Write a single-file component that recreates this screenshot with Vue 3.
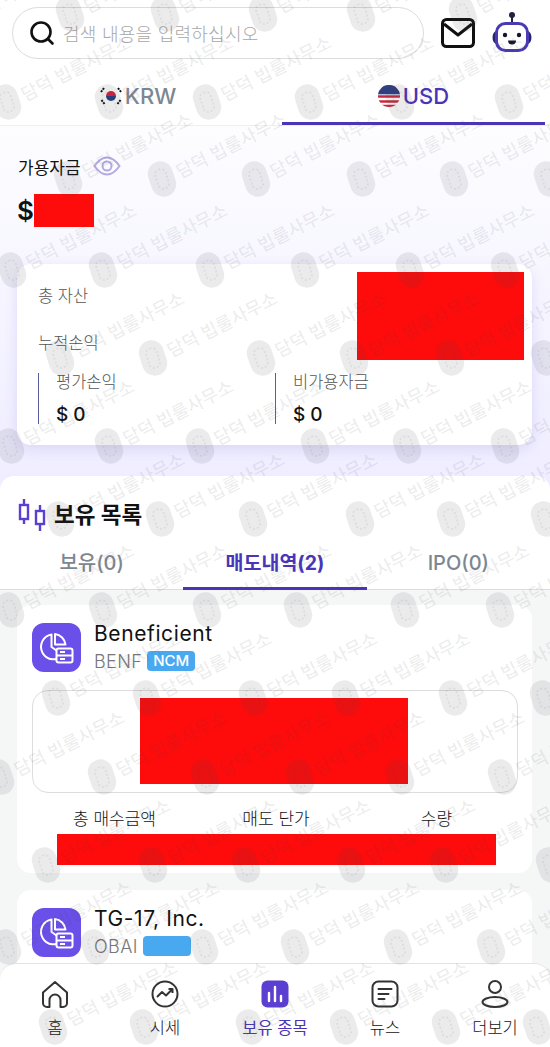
<script setup>
const markRows = [
  { y: 14, xs: [-30, 70, 165, 263, 361, 463] },
  { y: 102, xs: [7, 109, 207, 309, 400, 509] },
  { y: 179, xs: [68, 162, 256, 361, 454, 548] },
  { y: 270, xs: [12, 103, 210, 305, 410, 505] },
  { y: 358, xs: [60, 153, 261, 354, 450, 545] },
  { y: 446, xs: [10, 109, 200, 315, 407, 505] },
  { y: 519, xs: [60, 160, 253, 360, 451, 545] },
  { y: 610, xs: [10, 103, 207, 298, 405, 500] },
  { y: 698, xs: [56, 147, 253, 346, 453, 544] },
  { y: 777, xs: [0, 102, 205, 300, 400, 502] },
  { y: 865, xs: [46, 153, 246, 351, 444, 550] },
  { y: 947, xs: [7, 95, 204, 295, 398, 491] },
  { y: 1027, xs: [53, 144, 250, 344, 446, 537] }
]
const marks = markRows.flatMap(r => r.xs.map(x => ({ x, y: r.y })))

const navItems = [
  { key: 'home', label: '홈' },
  { key: 'market', label: '시세' },
  { key: 'hold', label: '보유 종목', active: true },
  { key: 'news', label: '뉴스' },
  { key: 'more', label: '더보기' }
]
</script>

<template>
  <div class="page">
    <header class="top-bar">
      <div class="search-box">
        <svg class="search-icon" width="28" height="28" viewBox="0 0 28 28" fill="none">
          <circle cx="13" cy="13" r="9.500" stroke="#111" stroke-width="2.600" />
          <path d="M20 20l4.500 4.500" stroke="#111" stroke-width="2.600" stroke-linecap="round" />
        </svg>
        <span class="placeholder">검색 내용을 입력하십시오</span>
      </div>
      <svg class="mail-icon" width="34" height="30" viewBox="0 0 34 30" fill="none">
        <rect x="1.500" y="1.500" width="31" height="27" rx="4" stroke="#111" stroke-width="3" />
        <path d="M3 6l14 11L31 6" stroke="#111" stroke-width="3" stroke-linejoin="round" />
      </svg>
      <svg class="bot-icon" width="44" height="44" viewBox="0 0 44 44" fill="none">
        <circle cx="22" cy="5" r="3" fill="#1f2340" />
        <path d="M22 7v6" stroke="#1f2340" stroke-width="2" />
        <path d="M6 21a5.500 7 0 0 0 0 13zM38 21a5.500 7 0 0 1 0 13z" fill="#27286b" />
        <rect x="6.500" y="13.500" width="31" height="27" rx="9" fill="#fff" stroke="#4a3bb5" stroke-width="3" />
        <circle cx="15" cy="25" r="2.200" fill="#14162e" />
        <circle cx="29" cy="25" r="2.200" fill="#14162e" />
        <path d="M18 30.500h8a4 4 0 0 1-8 0z" fill="#14162e" />
      </svg>
    </header>

    <nav class="currency-tabs">
      <div class="currency-tab krw">
        <svg width="22" height="22" viewBox="0 0 22 22">
          <circle cx="11" cy="11" r="11" fill="#fff" />
          <path d="M6 11a5 5 0 0 1 10 0z" fill="#d8203a" />
          <path d="M6 11a5 5 0 0 0 10 0z" fill="#22417f" />
          <path d="M1 7l3-4M1.500 15l3 4M21 7l-3-4M20.500 15l-3 4" stroke="#111" stroke-width="2" stroke-dasharray="2 1" />
        </svg>
        <span>KRW</span>
      </div>
      <div class="currency-tab on">
        <svg width="22" height="22" viewBox="0 0 22 22">
          <defs>
            <clipPath id="usClip"><circle cx="11" cy="11" r="11" /></clipPath>
          </defs>
          <g clip-path="url(#usClip)">
            <rect width="22" height="22" fill="#fff" />
            <path d="M0 1.500h22M0 6.500h22M0 11.500h22M0 16.500h22M0 21h22" stroke="#c8283c" stroke-width="2.400" />
            <rect width="22" height="10" fill="#2f3f80" />
            <path d="M0 9.500h22" stroke="#b9bedb" stroke-width="1" />
          </g>
        </svg>
        <span>USD</span>
      </div>
    </nav>

    <section class="balance-section">
      <div class="avail-label">
        <span>가용자금</span>
        <svg width="28" height="20" viewBox="0 0 28 20" fill="none">
          <path d="M1.500 10C6 3.500 10 1.500 14 1.500S22 3.500 26.500 10C22 16.500 18 18.500 14 18.500S6 16.500 1.500 10z" stroke="#b3a9e2" stroke-width="2" />
          <circle cx="14" cy="10" r="4.500" stroke="#b3a9e2" stroke-width="2" />
        </svg>
      </div>
      <div class="avail-value"><span>$</span><i class="redact balance-redact"></i></div>

      <div class="asset-card">
        <i class="redact asset-redact"></i>
        <div class="asset-line">총 자산</div>
        <div class="asset-line second">누적손익</div>
        <div class="asset-sub">
          <div class="sub-cell">
            <div class="sub-label">평가손익</div>
            <div class="sub-value">$ 0</div>
          </div>
          <div class="sub-cell">
            <div class="sub-label">비가용자금</div>
            <div class="sub-value">$ 0</div>
          </div>
        </div>
      </div>
    </section>

    <section class="holdings">
      <div class="holdings-head">
        <div class="holdings-title">
          <svg width="28" height="34" viewBox="0 0 28 34" fill="none" stroke="#5b3fd0">
            <rect x="2" y="7" width="8" height="14" stroke-width="2.400" />
            <path d="M6 1v6M6 21v5" stroke-width="2.400" />
            <rect x="18" y="13" width="8" height="13" stroke-width="2.400" />
            <path d="M22 7v6M22 26v7" stroke-width="2.400" />
          </svg>
          <h2>보유 목록</h2>
        </div>
        <div class="sub-tabs">
          <div class="sub-tab">보유(0)</div>
          <div class="sub-tab on">매도내역(2)</div>
          <div class="sub-tab">IPO(0)</div>
        </div>
      </div>

      <div class="stock-list">
        <article class="stock-card">
          <div class="stock-top">
            <div class="stock-icon">
              <svg width="49" height="49" viewBox="0 0 49 49" fill="none" stroke="#fff" stroke-width="2">
                <path d="M19.500 11.500A12.500 12.500 0 1 0 31 32L19.500 24z" stroke-linejoin="round" />
                <path d="M23 11a12 12 0 0 1 10.500 10.500H23z" stroke-linejoin="round" />
                <rect x="24.500" y="25.500" width="16" height="14" rx="2" fill="#6a4fe8" />
                <path d="M24.500 32.500h16M28 29h5M28 36h5" />
              </svg>
            </div>
            <div class="stock-text">
              <div class="stock-name">Beneficient</div>
              <div class="stock-meta"><span>BENF</span><b class="badge">NCM</b></div>
            </div>
          </div>
          <div class="price-box"><i class="redact price-redact"></i></div>
          <div class="stock-labels">
            <span>총 매수금액</span>
            <span>매도 단가</span>
            <span>수량</span>
          </div>
          <i class="redact row-redact"></i>
        </article>

        <article class="stock-card">
          <div class="stock-top">
            <div class="stock-icon">
              <svg width="49" height="49" viewBox="0 0 49 49" fill="none" stroke="#fff" stroke-width="2">
                <path d="M19.500 11.500A12.500 12.500 0 1 0 31 32L19.500 24z" stroke-linejoin="round" />
                <path d="M23 11a12 12 0 0 1 10.500 10.500H23z" stroke-linejoin="round" />
                <rect x="24.500" y="25.500" width="16" height="14" rx="2" fill="#6a4fe8" />
                <path d="M24.500 32.500h16M28 29h5M28 36h5" />
              </svg>
            </div>
            <div class="stock-text">
              <div class="stock-name">TG-17, Inc.</div>
              <div class="stock-meta"><span>OBAI</span><b class="badge blank"></b></div>
            </div>
          </div>
        </article>
      </div>
    </section>

    <footer class="bottom-nav">
      <div v-for="item in navItems" :key="item.key" :class="['nav-item', { active: item.active }]">
        <svg v-if="item.key === 'home'" width="30" height="30" viewBox="0 0 30 30" fill="none" stroke="#333" stroke-width="2">
          <path d="M3 13.500L15 3l12 10.500V24a4 4 0 0 1-4 4h-2.500v-7a5.500 5.500 0 0 0-11 0v7H7a4 4 0 0 1-4-4z" stroke-linejoin="round" />
        </svg>
        <svg v-else-if="item.key === 'market'" width="30" height="30" viewBox="0 0 30 30" fill="none" stroke="#333" stroke-width="2">
          <circle cx="15" cy="15" r="12.500" />
          <path d="M7 18l5-5 4 3.500L22.500 10M18.500 10h4v4" stroke-linejoin="round" />
        </svg>
        <svg v-else-if="item.key === 'hold'" width="30" height="30" viewBox="0 0 30 30">
          <rect x="1.500" y="1.500" width="27" height="27" rx="6" fill="#5b3fd0" />
          <path d="M9 14v8M15 8v14M21 17v5" stroke="#fff" stroke-width="2.400" stroke-linecap="round" />
        </svg>
        <svg v-else-if="item.key === 'news'" width="30" height="30" viewBox="0 0 30 30" fill="none" stroke="#333" stroke-width="2">
          <rect x="2.500" y="2.500" width="25" height="25" rx="6" />
          <path d="M8.500 10h13M8.500 15h10M8.500 20h6" stroke-linecap="round" />
        </svg>
        <svg v-else width="30" height="30" viewBox="0 0 30 30" fill="none" stroke="#333" stroke-width="2">
          <circle cx="15" cy="8" r="6" />
          <ellipse cx="15" cy="23" rx="12.500" ry="5" />
        </svg>
        <span>{{ item.label }}</span>
      </div>
    </footer>

    <div class="watermark">
      <div v-for="(m, i) in marks" :key="i" class="mark" :style="{ left: m.x + 'px', top: m.y + 'px' }">
        <i class="stamp"></i>
        <span>담덕 빕룰사무소</span>
      </div>
    </div>
  </div>
</template>

<style scoped>
.page {
  position: relative;
  width: 550px;
  height: 1047px;
  overflow: hidden;
  background: #fff;
  font-family: Inter, "Noto Sans CJK KR", sans-serif;
  color: #111;
}
.top-bar {
  display: flex;
  align-items: center;
  height: 66px;
  padding: 0 0 0 12px;
  box-sizing: border-box;
}
.search-box {
  display: flex;
  align-items: center;
  width: 412px;
  height: 52px;
  box-sizing: border-box;
  border: 1px solid #ddd;
  border-radius: 26px;
  padding-left: 15px;
}
.search-icon { margin-right: 7px; }
.placeholder {
  font-size: 18px;
  font-weight: 300;
  letter-spacing: 0.25px;
  color: #a8a8a8;
}
.mail-icon { margin-left: 17px; }
.bot-icon { margin-left: 15px; margin-top: -2px; }
.currency-tabs {
  display: flex;
  height: 60px;
  padding-right: 5px;
  border-bottom: 1px solid #eee;
  box-sizing: border-box;
}
.currency-tab {
  flex: 1;
  display: flex;
  align-items: center;
  justify-content: center;
  gap: 3px;
  font-size: 22px;
  font-weight: 500;
  color: #7d8792;
  padding-top: 3px;
  box-sizing: border-box;
  border-bottom: 3px solid transparent;
}
.currency-tab.krw {
  flex: 0 0 282px;
  padding-right: 6px;
}
.currency-tab.on {
  color: #4a35b8;
  border-bottom-color: #4a35b8;
}
.balance-section {
  height: 350px;
  box-sizing: border-box;
  padding: 30px 18px 0 17px;
  background: linear-gradient(180deg, #fdfdff 0%, #f6f5ff 50%, #efedff 100%);
}
.avail-label {
  display: flex;
  align-items: center;
  gap: 12px;
  font-size: 17px;
  padding-left: 1px;
  height: 22px;
  margin-top: -1px;
}
.avail-value {
  display: flex;
  align-items: center;
  height: 34px;
  margin-top: 16px;
  font-size: 26px;
  font-weight: 600;
}
.redact {
  display: block;
  background: #fe0b0b;
}
.balance-redact {
  width: 60px;
  height: 33px;
  margin-left: 0;
}
.asset-card {
  position: relative;
  height: 181px;
  margin-top: 37px;
  box-sizing: border-box;
  padding: 21px 20px 0 21px;
  background: #fff;
  border-radius: 14px;
  box-shadow: 0 4px 14px rgba(90, 70, 200, 0.14);
}
.asset-redact {
  position: absolute;
  left: 340px;
  top: 8px;
  width: 167px;
  height: 88px;
}
.asset-line {
  font-size: 16.500px;
  font-weight: 300;
  line-height: 22px;
  color: #555;
}
.asset-line.second { margin-top: 25px; }
.asset-sub {
  display: flex;
  margin-top: 19px;
}
.sub-cell {
  width: 237px;
  height: 51px;
  box-sizing: border-box;
  border-left: 1px solid #5a5f9a;
  padding-left: 17px;
}
.sub-label {
  font-size: 16.500px;
  font-weight: 300;
  line-height: 18px;
  color: #555;
}
.sub-value {
  margin-top: 13px;
  font-size: 19px;
  font-weight: 500;
  line-height: 22px;
}
.holdings {
  background: #efedff;
}
.holdings-head {
  height: 114px;
  box-sizing: border-box;
  background: #fff;
  border-radius: 14px 14px 0 0;
  border-bottom: 1px solid #ddd;
  padding: 22px 0 0;
}
.holdings-title {
  display: flex;
  align-items: center;
  gap: 8px;
  padding-left: 18px;
  height: 34px;
}
.holdings-title h2 {
  margin: 0;
  font-size: 22.500px;
  font-weight: 700;
  position: relative;
  top: -2px;
}
.sub-tabs {
  display: flex;
  margin-top: 8px;
}
.sub-tab {
  flex: 1;
  text-align: center;
  height: 50px;
  line-height: 47px;
  font-size: 20px;
  font-weight: 500;
  color: #7d8792;
  box-sizing: border-box;
}
.sub-tab.on {
  color: #4a35b8;
  font-size: 19.500px;
  font-weight: 700;
  border-bottom: 3px solid #4a35b8;
}
.stock-list {
  background: #f5f6f6;
  padding: 15px 18px 0 17px;
  height: 460px;
}
.stock-card {
  background: #fff;
  border-radius: 14px;
  height: 268px;
  margin-bottom: 17px;
  padding: 18px 14px 0 15px;
  box-sizing: border-box;
}
.stock-top {
  display: flex;
  gap: 13px;
}
.stock-icon {
  width: 49px;
  height: 49px;
  border-radius: 12px;
  background: #6a4fe8;
}
.stock-icon svg { display: block; }
.stock-name {
  font-size: 21px;
  line-height: 24px;
  letter-spacing: 0.6px;
  margin-top: -1px;
}
.stock-meta {
  display: flex;
  align-items: center;
  gap: 5px;
  margin-top: 5px;
  height: 20px;
  font-size: 18px;
  font-weight: 300;
  letter-spacing: 0.4px;
  color: #777;
}
.badge {
  display: block;
  width: 48px;
  height: 20px;
  line-height: 20px;
  text-align: center;
  border-radius: 4px;
  background: #49a9f0;
  color: #fff;
  font-size: 15px;
  font-weight: 500;
  letter-spacing: 0;
}
.price-box {
  display: flex;
  justify-content: center;
  height: 103px;
  margin-top: 18px;
  box-sizing: border-box;
  border: 1px solid #ddd;
  border-radius: 16px;
  padding: 7px 2px 0 0;
}
.price-redact {
  width: 268px;
  height: 86px;
}
.stock-labels {
  display: grid;
  grid-template-columns: 163px 160px 161px;
  justify-items: center;
  margin: 15px 0 0 1px;
  font-size: 17px;
  font-weight: 300;
  line-height: 22px;
  color: #111;
}
.row-redact {
  width: 439px;
  height: 31px;
  margin: 4px 0 0 25px;
}
.bottom-nav {
  position: absolute;
  left: 0;
  right: 0;
  bottom: 0;
  height: 84px;
  box-sizing: border-box;
  display: flex;
  padding-top: 15px;
  background: #fff;
  border-top: 1px solid #e4e4e4;
  border-radius: 16px 16px 0 0;
}
.nav-item {
  flex: 1;
  display: flex;
  flex-direction: column;
  align-items: center;
  gap: 6px;
  font-size: 16.500px;
  font-weight: 300;
  color: #111;
}
.nav-item.active {
  color: #4a35b8;
  font-weight: 400;
}
.watermark {
  position: absolute;
  inset: 0;
  pointer-events: none;
}
.mark {
  position: absolute;
  display: flex;
  align-items: center;
  gap: 4px;
  white-space: nowrap;
  transform: translate(-12.500px, -18px) rotate(-27deg);
  transform-origin: 12.500px 18px;
  color: rgba(70, 70, 80, 0.1);
  font-size: 18px;
  font-weight: 500;
}
.stamp {
  position: relative;
  display: block;
  width: 25px;
  height: 36px;
  border-radius: 12.500px;
  background: rgba(70, 70, 80, 0.11);
  transform: rotate(9deg);
}
.stamp::after {
  content: "";
  position: absolute;
  inset: 7px 6px;
  border-radius: 6px;
  border: 2px dotted rgba(70, 70, 80, 0.08);
}
</style>
